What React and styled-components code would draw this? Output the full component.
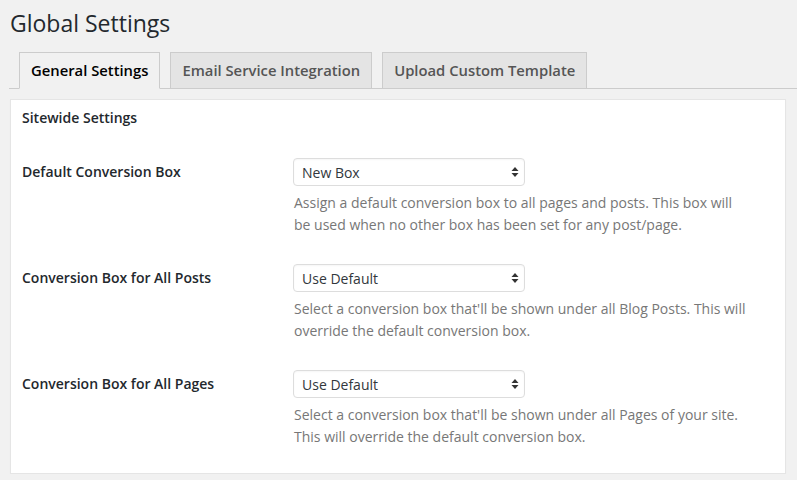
import styled, { createGlobalStyle } from "styled-components";

const GlobalStyle = createGlobalStyle`
  body {
    margin: 0;
    background: #f1f1f1;
    font-family: "Open Sans", "Noto Sans", sans-serif;
    color: #23282d;
  }
`;

const rows = [
  {
    label: "Default Conversion Box",
    value: "New Box",
    help: "Assign a default conversion box to all pages and posts. This box will be used when no other box has been set for any post/page.",
  },
  {
    label: "Conversion Box for All Posts",
    value: "Use Default",
    help: "Select a conversion box that'll be shown under all Blog Posts. This will override the default conversion box.",
  },
  {
    label: "Conversion Box for All Pages",
    value: "Use Default",
    help: "Select a conversion box that'll be shown under all Pages of your site. This will override the default conversion box.",
  },
];

function App() {
  return (
    <Wrap>
      <GlobalStyle />
      <Title>Global Settings</Title>
      <TabBar>
        <Tab active>General Settings</Tab>
        <Tab>Email Service Integration</Tab>
        <Tab>Upload Custom Template</Tab>
      </TabBar>
      <Panel>
        <Heading>Sitewide Settings</Heading>
        {rows.map((r) => (
          <Row key={r.label}>
            <Label>{r.label}</Label>
            <Field>
              <SelectBox>
                <Select defaultValue={r.value}>
                  <option>{r.value}</option>
                </Select>
                <Arrows width="8" height="12" viewBox="0 0 8 12">
                  <path d="M4 1 L7.5 5 H0.5 Z" fill="#333" />
                  <path d="M4 11 L7.5 7 H0.5 Z" fill="#333" />
                </Arrows>
              </SelectBox>
              <Help>{r.help}</Help>
            </Field>
          </Row>
        ))}
      </Panel>
    </Wrap>
  );
}

const Wrap = styled.div`
  padding: 0 11px 0 10px;
`;

const Title = styled.h1`
  margin: 0;
  padding: 9px 0 0;
  font-size: 23px;
  font-weight: 400;
  line-height: 29px;
  color: #23282d;
`;

const TabBar = styled.div`
  display: flex;
  gap: 10px;
  margin: 14px -11px 0 -1px;
  padding-left: 10px;
  border-bottom: 1px solid #ccc;
`;

const Tab = styled.div`
  margin-bottom: -1px;
  padding: 6px 11px 7px;
  font-size: 14.8px;
  font-weight: 600;
  line-height: 22px;
  border: 1px solid #ccc;
  border-bottom-color: ${(p) => (p.active ? "#f1f1f1" : "#ccc")};
  background: ${(p) => (p.active ? "#f1f1f1" : "#e4e4e4")};
  color: ${(p) => (p.active ? "#000" : "#555")};
`;

const Panel = styled.div`
  margin-top: 10px;
  background: #fff;
  border: 1px solid #e5e5e5;
  box-shadow: 0 1px 1px rgba(0, 0, 0, 0.04);
  padding: 8px 11px 25px;
`;

const Heading = styled.h3`
  margin: 0 0 30px;
  font-size: 14px;
  font-weight: 600;
  line-height: 20px;
  color: #23282d;
`;

const Row = styled.div`
  display: grid;
  grid-template-columns: 271px 1fr;
  margin-bottom: 28px;
  &:last-child {
    margin-bottom: 0;
  }
`;

const Label = styled.div`
  font-size: 14px;
  font-weight: 600;
  line-height: 28px;
  color: #23282d;
`;

const Field = styled.div`
  display: flex;
  flex-direction: column;
`;

const SelectBox = styled.div`
  position: relative;
  width: 232px;
`;

const Select = styled.select`
  appearance: none;
  width: 100%;
  height: 28px;
  margin: 0;
  padding: 0 8px;
  border: 1px solid #ddd;
  border-radius: 4px;
  background: #fff;
  font-family: "Open Sans", sans-serif;
  font-size: 14px;
  color: #32373c;
  box-shadow: inset 0 1px 2px rgba(0, 0, 0, 0.04);
`;

const Arrows = styled.svg`
  position: absolute;
  right: 6px;
  top: 8px;
`;

const Help = styled.p`
  margin: 6px 0 0 1px;
  max-width: 455px;
  font-size: 14px;
  line-height: 22px;
  color: #777;
`;

export default App;
